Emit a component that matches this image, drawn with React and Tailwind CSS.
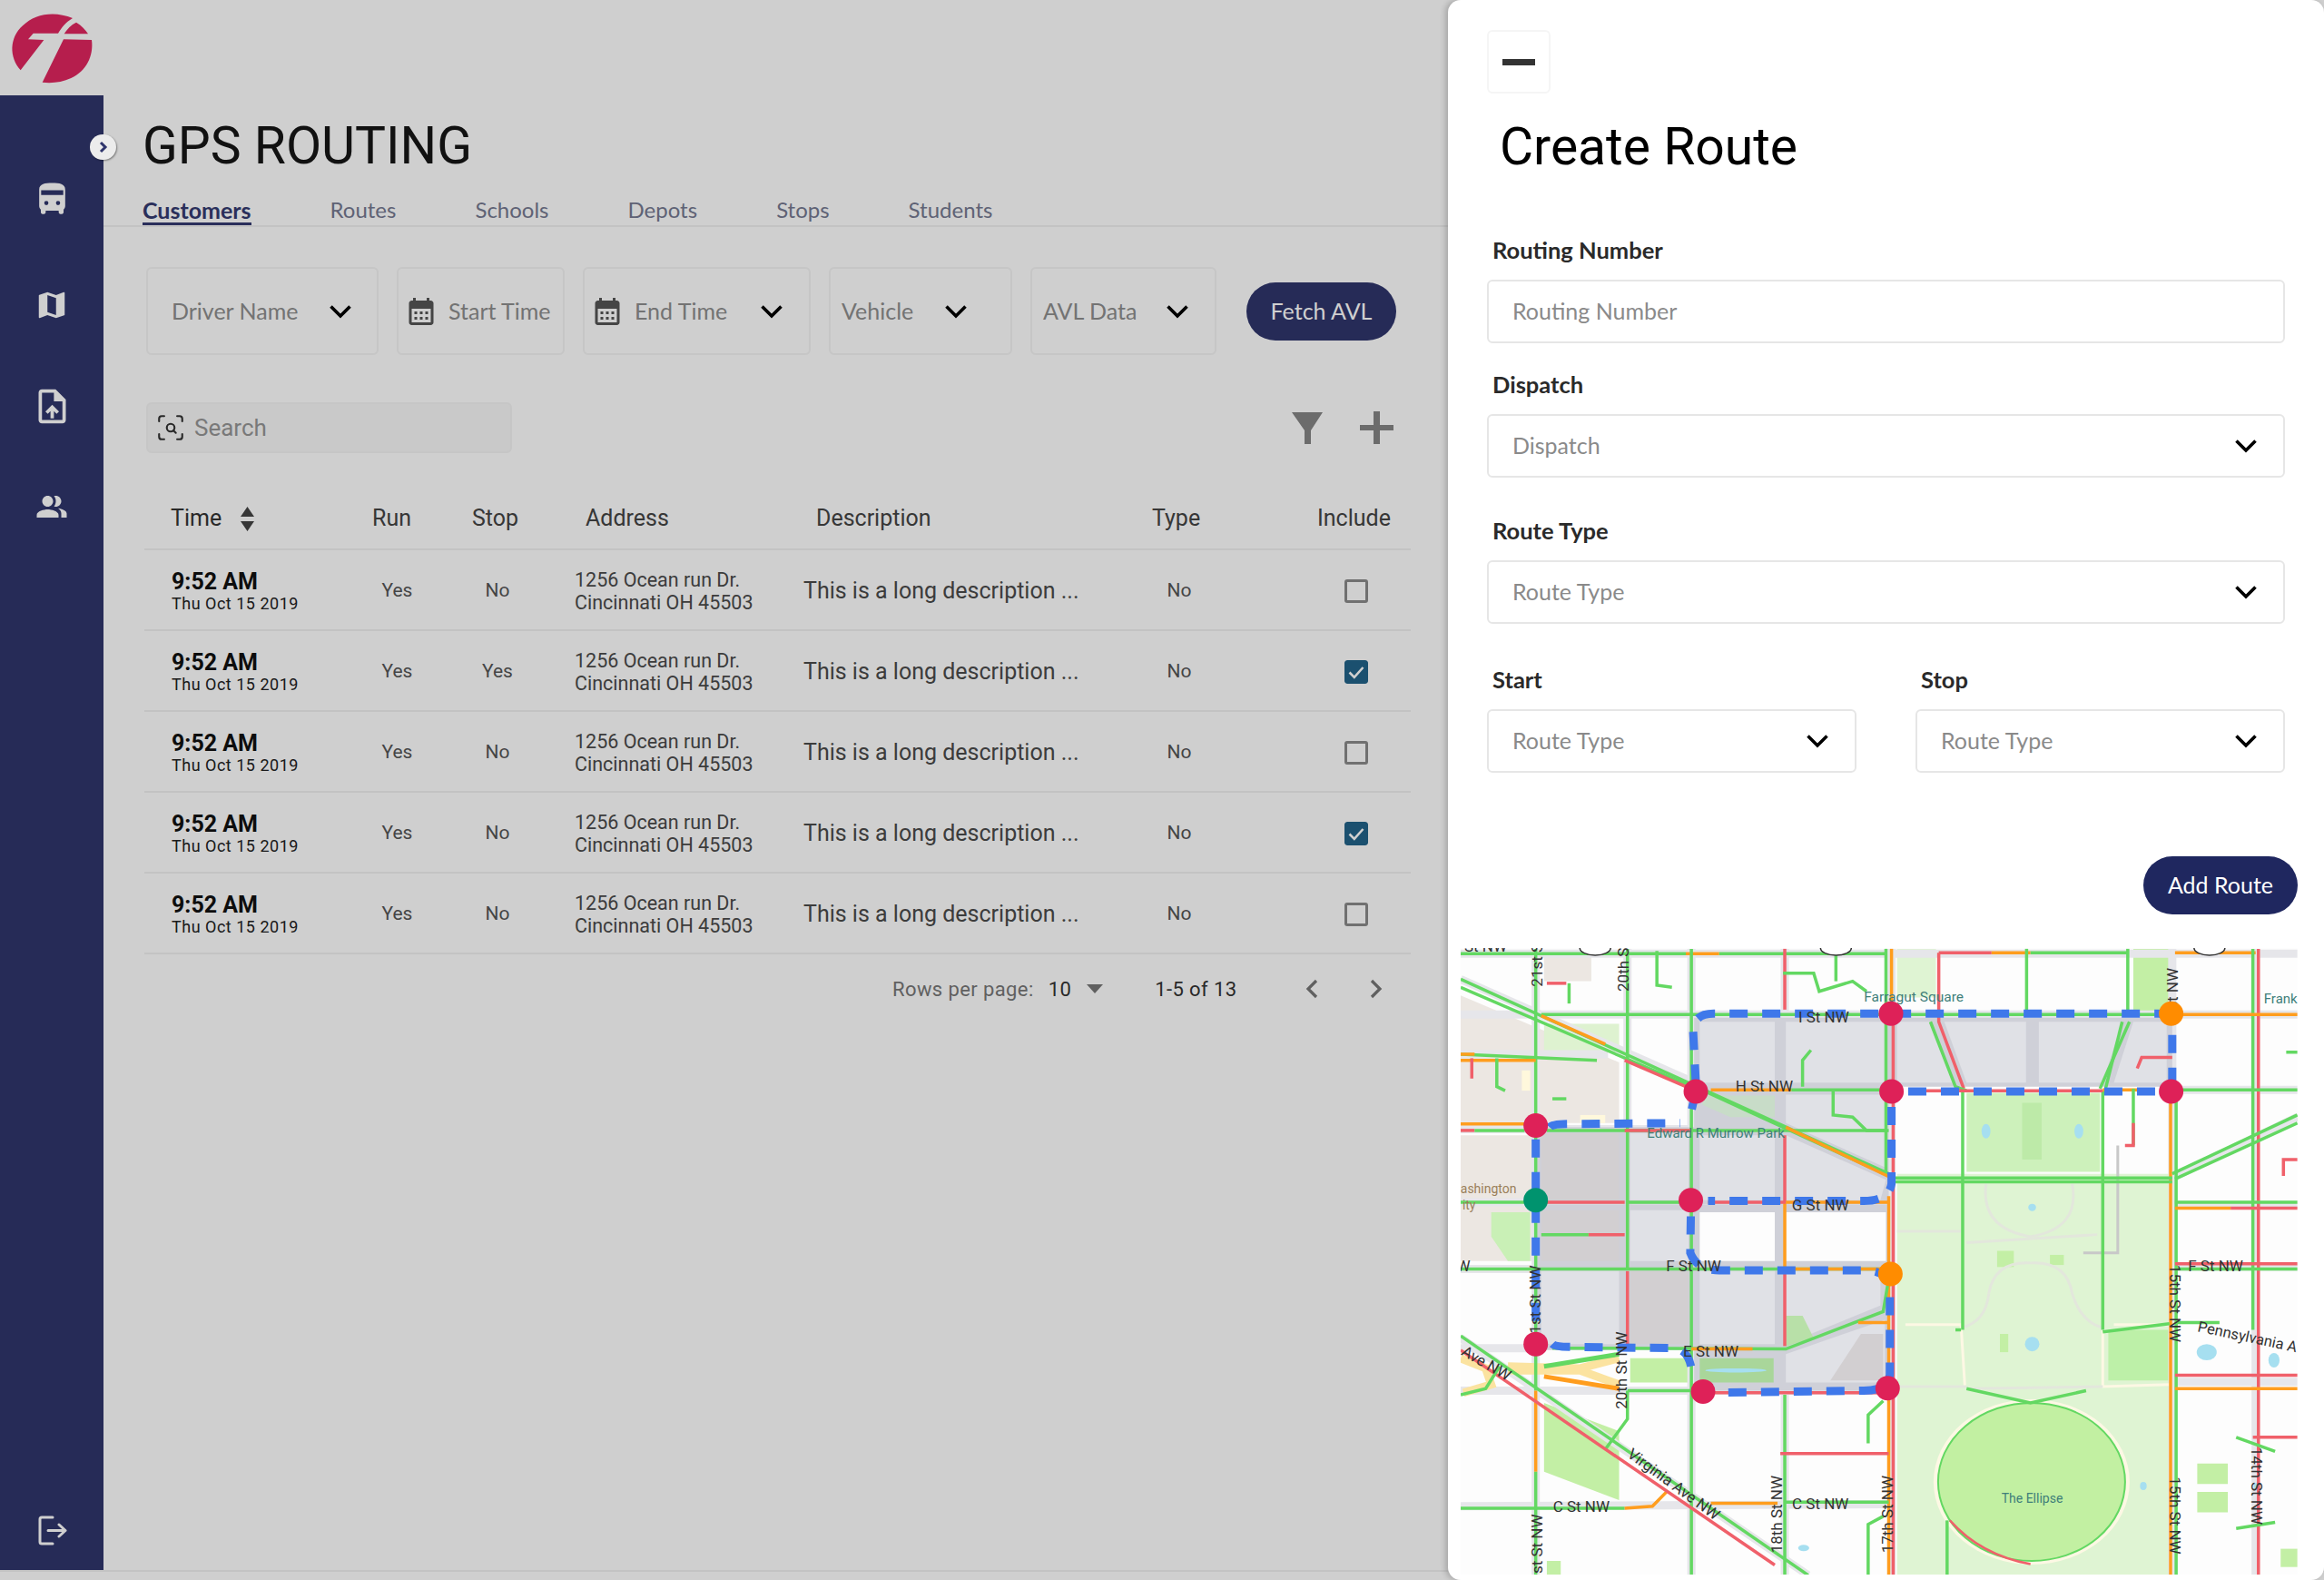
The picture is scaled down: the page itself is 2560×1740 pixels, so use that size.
import { ScanSearch } from "lucide-react";

const rows = [
  { stop: "No", on: false },
  { stop: "Yes", on: true },
  { stop: "No", on: false },
  { stop: "No", on: true },
  { stop: "No", on: false },
];

const tabs = ["Customers", "Routes", "Schools", "Depots", "Stops", "Students"];

// table columns: time, run, stop, address, description, type, include
const cols = "grid grid-cols-[231px_95px_126px_254px_374px_120px_195px]";

function Chevron({ className = "" }) {
  return (
    <svg width="26" height="16" viewBox="0 0 26 16" className={className}>
      <path d="M2.5 2.5 L13 13 L23.5 2.5" fill="none" stroke="#000" strokeWidth="3.6" />
    </svg>
  );
}

function Calendar() {
  return (
    <svg width="36" height="36" viewBox="0 0 24 24" fill="#555" className="shrink-0">
      <path d="M19 4h-1V2h-2v2H8V2H6v2H5c-1.11 0-1.99.9-1.99 2L3 20c0 1.1.89 2 2 2h14c1.1 0 2-.9 2-2V6c0-1.1-.9-2-2-2zm0 16H5V10h14v10zM9 14H7v-2h2v2zm4 0h-2v-2h2v2zm4 0h-2v-2h2v2zm-8 4H7v-2h2v2zm4 0h-2v-2h2v2zm4 0h-2v-2h2v2z" />
    </svg>
  );
}

function Logo() {
  return (
    <svg width="160" height="105" viewBox="0 0 480 315">
      <g fill="#e0265f">
        <path d="M68 232 C30 190 30 125 75 85 C115 45 180 35 240 60 C215 75 205 90 192 110 L110 110 L93 130 L145 132 Z" />
        <path d="M252 74 C270 85 282 98 291 112 L212 112 C222 95 235 82 252 74 Z" />
        <path d="M210 130 L303 132 C310 185 285 235 235 258 C205 272 170 276 140 272 Z" />
      </g>
    </svg>
  );
}

function Sidebar() {
  return (
    <div className="w-[114px] shrink-0 flex flex-col">
      <div className="h-[105px]">
        <Logo />
      </div>
      <div className="flex-1 bg-[#2f356c] flex flex-col items-center text-white">
        <div className="h-[48px] mt-[90px] flex items-center">
          <svg width="43" height="43" viewBox="0 0 24 24" fill="currentColor">
            <path fillRule="evenodd" d="M4 16c0 .88.39 1.67 1 2.22V20c0 .55.45 1 1 1h1c.55 0 1-.45 1-1v-1h8v1c0 .55.45 1 1 1h1c.55 0 1-.45 1-1v-1.78c.61-.55 1-1.34 1-2.22V6c0-3.5-3.58-4-8-4s-8 .5-8 4v10zM5.2 6.4h13.6v3H5.2zM8.4 13a1.3 1.3 0 1 1 0 2.6 1.3 1.3 0 0 1 0-2.6zM15.6 13a1.3 1.3 0 1 1 0 2.6 1.3 1.3 0 0 1 0-2.6z" />
          </svg>
        </div>
        <div className="h-[48px] mt-[69px] flex items-center">
          <svg width="38" height="38" viewBox="0 0 24 24" fill="currentColor">
            <path d="M20.5 3l-.16.03L15 5.1 9 3 3.36 4.9c-.21.07-.36.25-.36.48V20.5c0 .28.22.5.5.5l.16-.03L9 18.9l6 2.1 5.64-1.9c.21-.07.36-.25.36-.48V3.5c0-.28-.22-.5-.5-.5zM15 19l-6-2.11V5l6 2.11V19z" />
          </svg>
        </div>
        <div className="h-[48px] mt-[63px] flex items-center">
          <svg width="45" height="45" viewBox="0 0 24 24" fill="currentColor">
            <path d="M14 2H6c-1.1 0-1.99.9-1.99 2L4 20c0 1.1.89 2 1.99 2H18c1.1 0 2-.9 2-2V8l-6-6zm4 18H6V4h7v5h5v11zM8 15.01l1.41 1.41L11 14.84V19h2v-4.16l1.59 1.59L16 15.01 12.01 11 8 15.01z" />
          </svg>
        </div>
        <div className="h-[48px] mt-[63px] flex items-center">
          <svg width="36" height="36" viewBox="0 0 24 24" fill="currentColor">
            <path d="M16.67 13.13C18.04 14.06 19 15.32 19 17v3h4v-3c0-2.18-3.57-3.47-6.33-3.87zM15 12c2.21 0 4-1.79 4-4s-1.79-4-4-4c-.47 0-.91.1-1.33.24C14.5 5.27 15 6.58 15 8s-.5 2.73-1.33 3.76c.42.14.86.24 1.33.24zM9 12c2.21 0 4-1.79 4-4s-1.79-4-4-4-4 1.79-4 4 1.79 4 4 4zm0 2c-2.67 0-8 1.34-8 4v2h16v-2c0-2.66-5.33-4-8-4z" />
          </svg>
        </div>
        <div className="h-[48px] mt-auto mb-[20px] flex items-center">
          <svg width="33" height="33" viewBox="0 0 33 33" fill="none" stroke="currentColor" strokeWidth="3" strokeLinecap="round" strokeLinejoin="round">
            <path d="M17 2 H5 a2 2 0 0 0 -2 2 V29 a2 2 0 0 0 2 2 H17" />
            <path d="M12 16.500 H31 M24 10 L31 16.500 L24 23" />
          </svg>
        </div>
      </div>
    </div>
  );
}

function Filters() {
  return (
    <div className="flex items-center ml-[47px] mt-[44px]">
      <div className="w-[256px] h-[97px] border-2 border-[#f4f4f4] rounded-md flex items-center justify-between pl-[26px] pr-[27px] font-[Lato] text-[25px] text-[#8e8e8e]">
        <span>Driver Name</span>
        <Chevron />
      </div>
      <div className="w-[185px] h-[97px] ml-[20px] border-2 border-[#f4f4f4] rounded-md flex items-center gap-[12px] pl-[7px] font-[Lato] text-[25px] text-[#8e8e8e] whitespace-nowrap">
        <Calendar />
        <span>Start Time</span>
      </div>
      <div className="w-[251px] h-[97px] ml-[20px] border-2 border-[#f4f4f4] rounded-md flex items-center gap-[12px] pl-[7px] pr-[28px] font-[Lato] text-[25px] text-[#8e8e8e] whitespace-nowrap">
        <Calendar />
        <span>End Time</span>
        <Chevron className="ml-auto" />
      </div>
      <div className="w-[202px] h-[97px] ml-[20px] border-2 border-[#f4f4f4] rounded-md flex items-center justify-between pl-[12px] pr-[47px] font-[Lato] text-[25px] text-[#8e8e8e]">
        <span>Vehicle</span>
        <Chevron />
      </div>
      <div className="w-[205px] h-[97px] ml-[20px] border-2 border-[#f4f4f4] rounded-md flex items-center justify-between pl-[12px] pr-[28px] font-[Lato] text-[25px] text-[#8e8e8e]">
        <span>AVL Data</span>
        <Chevron />
      </div>
      <button className="w-[165px] h-[64px] ml-[33px] rounded-full bg-[#2f356c] text-white font-[Lato] text-[25px]">
        Fetch AVL
      </button>
    </div>
  );
}

function Toolbar() {
  return (
    <div className="flex items-center justify-between ml-[47px] mt-[52px] w-[1374px]">
      <div className="w-[403px] h-[56px] bg-[#f8f8f8] border-2 border-[#f4f4f4] rounded-md flex items-center pl-[8px] gap-[9px] font-[Roboto] text-[26px] text-[#969696]">
        <ScanSearch size={34} strokeWidth={1.5} color="#333" />
        <span>Search</span>
      </div>
      <div className="flex items-center gap-[41px]">
        <svg width="34" height="35" viewBox="0 0 34 35" fill="#858585">
          <path d="M0 0 H34 L21 20 V35 H14 V20 Z" />
        </svg>
        <svg width="37" height="36" viewBox="0 0 37 36" fill="#858585">
          <path d="M15 0 H22 V15 H37 V21 H22 V36 H15 V21 H0 V15 H15 Z" />
        </svg>
      </div>
    </div>
  );
}

function Checkbox({ on }) {
  if (on) {
    return (
      <svg width="26" height="26" viewBox="0 0 26 26" className="rounded-[3px]">
        <rect width="26" height="26" rx="3" fill="#226389" />
        <path d="M5.500 13.500 L10.800 18.800 L20.500 8" fill="none" stroke="#fff" strokeWidth="2.6" />
      </svg>
    );
  }
  return <div className="w-[26px] h-[26px] border-[3px] border-[#8a8a8a] rounded-[3px]" />;
}

function Table() {
  return (
    <div className="ml-[45px] mt-[39px] w-[1395px] font-[Roboto]">
      <div className={`${cols} h-[68px] items-center border-b-2 border-[#f0f0f0] text-[25px] text-[#444]`}>
        <div className="pl-[29px] flex items-center gap-[21px] text-[#333]">
          Time
          <svg width="15" height="27" viewBox="0 0 15 27" fill="#444">
            <path d="M7.500 0 L15 11 H0 Z M0 16 H15 L7.500 27 Z" />
          </svg>
        </div>
        <div className="pl-[20px]">Run</div>
        <div className="pl-[35px]">Stop</div>
        <div className="pl-[34px]">Address</div>
        <div className="pl-[34px]">Description</div>
        <div className="pl-[30px]">Type</div>
        <div className="pl-[92px]">Include</div>
      </div>
      {rows.map((r, i) => (
        <div key={i} className={`${cols} h-[89px] pt-[2px] items-center border-b-2 border-[#f0f0f0]`}>
          <div className="pl-[30px]">
            <div className="text-[25px] leading-[28px] font-bold text-[#111]">9:52 AM</div>
            <div className="text-[18px] leading-[20px] tracking-[0.5px] text-[#222]">Thu Oct 15 2019</div>
          </div>
          <div className="text-center text-[21px] text-[#555]">Yes</div>
          <div className="text-center text-[21px] text-[#555]">{r.stop}</div>
          <div className="pl-[22px] text-[21.5px] leading-[25px] text-[#4a4a4a]">
            <div>1256 Ocean run Dr.</div>
            <div>Cincinnati OH 45503</div>
          </div>
          <div className="pl-[20px] text-[25px] text-[#4a4a4a]">This is a long description ...</div>
          <div className="text-center text-[21px] text-[#555]">No</div>
          <div className="pl-[122px] flex"><Checkbox on={r.on} /></div>
        </div>
      ))}
    </div>
  );
}

function Pagination() {
  return (
    <div className="flex items-center ml-[869px] h-[76px] font-[Roboto] text-[22px] tracking-[0.4px]">
      <span className="text-[#777]">Rows per page:</span>
      <span className="ml-[16px] text-[#333]">10</span>
      <svg width="18" height="10" viewBox="0 0 18 10" fill="#777" className="ml-[17px]">
        <path d="M0 0 H18 L9 10 Z" />
      </svg>
      <span className="ml-[57px] text-[#333]">1-5 of 13</span>
      <svg width="14" height="22" viewBox="0 0 14 22" fill="none" stroke="#777" strokeWidth="3.200" className="ml-[76px]">
        <path d="M12 2 L3 11 L12 20" />
      </svg>
      <svg width="14" height="22" viewBox="0 0 14 22" fill="none" stroke="#777" strokeWidth="3.200" className="ml-[57px]">
        <path d="M2 2 L11 11 L2 20" />
      </svg>
    </div>
  );
}

function Field({ label, placeholder, select, className = "" }) {
  return (
    <div className={className}>
      <div className="pl-[6px] font-[Lato] font-bold text-[25.5px] leading-[26px] text-[#2a2a2a]">{label}</div>
      <div className="mt-[20px] h-[70px] border-2 border-[#e6e6e6] rounded-md flex items-center justify-between pl-[26px] pr-[28px] font-[Lato] text-[25px] text-[#8a8a8a]">
        <span>{placeholder}</span>
        {select && <Chevron />}
      </div>
    </div>
  );
}

// map is traced in a stretched crop, x/y bring the numbers back to real pixels
const x = (v) => (v - 15) / 1.633;
const y = (v) => (v - 8) / 2.24;
const poly = (p) => p.map((n, i) => (i % 2 ? y(n) : x(n))).join(" ");

const G = "#63d862";
const R = "#f0606a";
const O = "#ff9d1e";

const ground = [
  ["#ece7e2", [15,125,300,290,300,440,15,440]],
  ["#ece7e2", [15,470,145,470,145,780,15,780]],
  ["#ece7e2", [165,30,250,30,250,90,165,90]],
  ["#dff4d3", [800,565,1290,565,1290,1555,800,1555]],
  ["#cdf1bb", [925,365,1165,365,1165,560,925,560]],
  ["#dff4d3", [800,10,870,10,870,130,800,130]],
  ["#c3efa5", [1225,10,1290,10,1290,165,1225,165]],
  ["#def2d0", [165,195,300,195,300,265,165,265]],
  ["#bdf0a8", [1180,950,1290,950,1290,1075,1180,1075]],
  ["#c3efa5", [165,1130,300,1200,300,1370,165,1300]],
  ["#c3efa5", [320,1020,430,1020,430,1080,320,1080]],
  ["#c3efa5", [1340,1280,1395,1280,1395,1330,1340,1330]],
  ["#c3efa5", [1340,1350,1395,1350,1395,1400,1340,1400]],
  ["#c3efa5", [980,755,1010,755,1010,795,980,795]],
  ["#c3efa5", [1075,765,1100,765,1100,790,1075,790]],
  ["#c3efa5", [985,960,1000,960,1000,1005,985,1005]],
  ["#c3efa5", [1490,1490,1520,1490,1520,1535,1490,1535]],
  ["#c3efa5", [170,1520,195,1520,195,1555,170,1555]],
  ["#bdeaa8", [1025,390,1060,390,1060,530,1025,530]],
  ["#c9f0b6", [70,660,140,660,140,780,100,780,70,720]],
  ["#fff8dc", [125,310,140,310,140,360,125,360]],
  ["#fff8dc", [230,420,275,420,275,440,230,440]],
];

const roads = [
  [15,22,1520,22], [150,10,150,1555], [315,10,315,1000], [430,10,430,1555], [598,10,598,1555],
  [790,10,790,1555], [1295,10,1295,1555], [1445,10,1445,1555],
  [15,172,1520,172], [15,270,280,270], [1300,358,1520,358], [15,455,790,455], [1300,642,1520,642],
  [15,635,150,635], [1300,795,1520,795], [15,800,150,800], [15,995,150,995],
  [15,1100,790,1100], [1300,1078,1520,1078], [15,1385,790,1380], [15,85,435,340], [15,970,640,1555],
  [1295,575,1520,425],
];

// grey underlay of the dimmed blocks and the streets between them
const underlay = [
  [435,180,1295,180,1295,350,785,350,785,640,150,640,150,450,435,450],
  [150,640,785,640,785,800,150,800],
  [150,795,785,795,785,1100,435,1100,435,1000,150,1000],
];
const whiteBlocks = [
  [445,660,580,660,580,780,445,780],
  [600,660,780,660,780,780,600,780],
];

const blocks = [
  ["#e0e1e6", [445,190,580,190,580,340,445,340]],
  ["#e0e1e6", [600,190,780,190,780,340,600,340]],
  ["#e0e1e6", [800,190,862,190,905,340,800,340]],
  ["#e0e1e6", [885,190,1032,190,1032,340,925,340]],
  ["#e0e1e6", [1055,190,1205,190,1170,340,1055,340]],
  ["#e0e1e6", [1225,190,1285,190,1285,340,1190,340]],
  ["#e0e1e6", [600,370,780,370,780,550,600,440]],
  ["#c8dcc8", [450,372,580,372,580,425,500,425,450,395]],
  ["#e0e1e6", [445,470,580,470,580,630,445,630]],
  ["#e0e1e6", [600,470,780,580,770,630,600,630]],
  ["#d2cfd1", [160,465,300,465,300,630,160,630]],
  ["#e0e1e6", [320,465,425,465,425,630,320,630]],
  ["#d2cfd1", [160,655,300,655,300,780,160,780]],
  ["#e0e1e6", [320,655,425,655,425,780,320,780]],
  ["#e0e1e6", [160,805,300,805,300,985,160,985]],
  ["#d2cfd1", [320,805,425,805,425,985,320,985]],
  ["#e0e1e6", [445,805,580,805,580,985,445,985]],
  ["#e0e1e6", [600,805,770,805,770,890,600,985]],
  ["#e0e1e6", [600,1010,778,925,778,1080,600,1080]],
  ["#d2cfd1", [680,1075,735,960,775,960,775,1075]],
  ["#a9d69a", [445,1020,578,1020,578,1080,445,1080]],
  ["#b8e0a8", [600,915,630,915,650,970,600,990]],
];

// pale walks in the park
const walks = [
  ["#e3e7dc", "M960 590 Q950 700 1040 720 Q1130 700 1115 590"],
  ["#e3e7dc", "M965 860 Q975 780 1040 785 Q1105 780 1115 860 Q1130 930 1170 945"],
  ["#e3e7dc", "M915 945 Q960 930 965 860"],
  ["#e3e7dc", "M800 707 L915 707"],
  ["#e3e7dc", "M925 735 L1160 715"],
  ["#fdf8e4", "M815 937 L915 937 L922 1090 M1170 950 L1170 1090 L1290 1085 M1190 937 L1290 937"],
  ["#e3e7dc", "M925 1095 L1170 1090 M800 1090 L925 1090"],
  ["#e3e7dc", "M1090 1210 L1130 1210 L1130 1300 L1060 1310"],
  ["#c8c8c8", "M1197 495 L1197 760 L1135 760"],
];

const traffic = [
  [G, [15,22,420,22]], [O, [420,22,480,22]], [G, [480,22,780,22]], [R, [875,20,970,20]], [O, [970,20,1040,20]],
  [G, [1040,20,1215,20]], [O, [1300,20,1445,20]],
  [G, [150,10,150,1100]], [O, [150,1100,150,1300]], [G, [150,1300,150,1555]],
  [G, [315,10,315,800]], [R, [315,805,315,990]], [G, [315,1100,315,1170,275,1245]],
  [G, [430,10,430,1555]], [G, [598,1110,598,1555]], [O, [598,635,598,800]], [R, [598,10,598,160]],
  [R, [598,470,598,635]], [R, [598,800,598,990]], [O, [790,10,790,170]], [R, [793,170,793,1555]],
  [O, [785,620,785,1555]], [G, [780,10,780,170]], [G, [780,170,780,560]],
  [G, [918,360,918,950]], [G, [1170,360,1170,950]], [R, [875,20,875,190,920,355]], [G, [860,190,905,350,925,360]],
  [G, [1218,190,1165,355]], [G, [1205,190,1175,355]], [G, [1033,10,1033,172]], [G, [1215,10,1215,172]],
  [O, [1292,360,1292,1555]], [G, [1302,360,1302,1555]], [G, [1440,10,1440,950]], [R, [1450,10,1450,1555]],
  [G, [160,172,1290,172]], [O, [1300,172,1520,172]], [O, [465,358,610,358]], [G, [610,358,785,358]],
  [R, [820,360,1170,360]], [O, [1170,358,1250,358]], [G, [1300,358,1520,358]],
  [O, [15,442,130,442]], [R, [15,458,40,458]], [G, [40,458,130,458]], [G, [170,458,780,458]], [R, [310,458,430,458]],
  [G, [15,635,130,635]], [R, [170,635,310,635]], [G, [315,635,410,635]], [R, [460,635,600,635]], [O, [600,635,785,635]],
  [G, [1300,635,1520,635]], [O, [1300,650,1400,650]], [R, [1400,650,1520,650]],
  [G, [15,800,780,800]], [O, [600,800,785,800]], [R, [1300,787,1520,787]], [G, [1300,800,1520,800]],
  [G, [180,995,600,997,775,905,783,840]], [O, [430,997,540,997]], [G, [1300,932,1380,932]],
  [G, [315,1100,430,1100]], [R, [470,1105,785,1105]], [O, [730,932,785,932]],
  [R, [1300,1062,1520,1062]], [O, [1300,1095,1520,1095]], [R, [590,1255,785,1255]],
  [G, [15,1390,310,1390]], [O, [310,1390,360,1385,385,1350]], [O, [465,1378,585,1378]], [G, [598,1375,785,1375]],
  [G, [15,85,785,565]], [G, [15,105,430,350]], [O, [160,175,275,245]], [R, [310,285,420,350]],
  [G, [460,365,785,570]], [O, [600,450,785,572]],
  [G, [15,965,640,1555]], [R, [15,1000,580,1530]],
  [G, [795,575,1295,575]], [G, [795,585,1295,585]], [G, [1295,565,1520,420]], [G, [1300,578,1520,440]],
  [G, [15,270,260,285]], [O, [15,285,150,285]], [O, [15,270,40,270]], [R, [35,280,35,330]], [G, [80,280,80,350,95,360]],
  [G, [368,15,368,100,395,105]], [R, [170,95,205,95]], [G, [210,95,210,145]],
  [G, [595,70,650,70,660,115,720,90,745,115]], [G, [690,20,690,90]],
  [G, [630,350,630,285,645,260]], [G, [685,360,685,420,720,425,745,458,785,458]],
  [G, [205,380,180,380]], [G, [160,715,245,715]], [R, [245,715,310,715]],
  [R, [1232,305,1240,278,1295,278]], [R, [1495,570,1495,530,1520,530]], [G, [1500,265,1520,265]],
  [G, [1225,355,1225,495]], [R, [1225,440,1225,495,1210,495]],
  [G, [748,1230,748,1160,775,1125]], [G, [748,1555,748,1430,775,1410]], [G, [890,1555,890,1420]],
  [G, [915,950,905,950]], [G, [1170,955,1290,935]], [G, [925,1095,1040,1130,1140,1100]],
  [G, [15,1110,60,1095,85,1040]], [G, [1410,1215,1480,1250]], [G, [1410,1440,1480,1425]], [R, [1440,1215,1520,1215]],
];

// thick ramp west of 20th
const ramp = [
  ["#fbe3a0", 9, [15,1020,60,1045,70,1085,20,1105]],
  ["#fbe3a0", 9, [100,1040,230,1045,300,1020]],
  ["#fbe3a0", 9, [100,1050,230,1050,300,1085]],
  [O, 5, [165,1065,300,1095]],
  [G, 5, [165,1040,300,1010]],
];

const route = [
  "M{438,340} L{433,210} Q{435,170} {470,170} L{1270,170} Q{1295,170} {1295,220} L{1295,340}",
  "M{820,362} Q{825,362} {850,362} L{1270,362}",
  "M{175,450} Q{180,442} {210,442} L{410,440} M{438,362} L{430,410}",
  "M{790,400} L{790,590} Q{785,632} {740,632} L{460,632}",
  "M{429,670} L{428,760} Q{440,803} {480,803} L{740,803} Q{787,803} {787,850} L{787,1060} Q{785,1100} {740,1100} L{470,1105}",
  "M{150,480} L{150,960}",
  "M{180,985} Q{185,992} {210,992} L{400,995} Q{430,1000} {432,1070}",
].map((d) => d.replace(/\{(\d+),(\d+)\}/g, (_, a, b) => `${x(+a)} ${y(+b)}`));

const markers = [
  ["#de2158", 789, 170], ["#de2158", 438, 362], ["#de2158", 790, 362], ["#de2158", 1293, 362],
  ["#de2158", 150, 446], ["#de2158", 429, 630], ["#de2158", 150, 985], ["#de2158", 451, 1102],
  ["#de2158", 783, 1094], ["#ff8c00", 1293, 170], ["#ff8c00", 788, 812], ["#00936e", 150, 630],
];

const labels = [
  ["Farragut Square", 830, 132, 0, "#3f7f7a", 15.5], ["I St NW", 668, 182, 0, "#333", 17], ["H St NW", 561, 352, 0, "#333", 17],
  ["Edward R Murrow Park", 474, 468, 0, "#3f7f7a", 15], ["G St NW", 662, 645, 0, "#333", 17], ["F St NW", 434, 795, 0, "#333", 17],
  ["E St NW", 465, 1005, 0, "#333", 17], ["F St NW", 1373, 795, 0, "#333", 17], ["ashington", 65, 605, 0, "#9a7f5a", 14],
  ["ity", 30, 645, 0, "#9a7f5a", 14], ["C St NW", 232, 1388, 0, "#333", 17], ["C St NW", 662, 1383, 0, "#333", 17],
  ["The Ellipse", 1043, 1368, 0, "#3f7f7a", 14], ["Frank", 1490, 135, 0, "#3f7f7a", 15], ["21st S", 155, 50, -90, "#333", 17],
  ["20th St", 310, 55, -90, "#333", 17], ["1st St NW", 152, 875, -90, "#333", 17], ["20th St NW", 307, 1050, -90, "#333", 17],
  ["18th St NW", 585, 1405, -90, "#333", 17], ["17th St NW", 785, 1405, -90, "#333", 17], ["St NW", 1297, 110, -90, "#333", 17],
  ["st St NW", 155, 1478, -90, "#333", 17], ["15th St NW", 1297, 885, 90, "#333", 17], ["15th St NW", 1297, 1408, 90, "#333", 17],
  ["14th St NW", 1445, 1335, 90, "#333", 17], ["Virginia Ave NW", 397, 1333, 36, "#333", 17], ["Ave NW", 60, 1035, 30, "#333", 17],
  ["Pennsylvania A", 1430, 970, 12, "#333", 16.5], ["W", 20, 795, 0, "#333", 17], ["St NW", 60, 7, 0, "#333", 17],
];

const water = [[960,460,8,18], [1127,460,8,18], [1043,985,13,18], [1043,648,7,9], [1243,1335,6,10], [1448,1337,6,10], [1357,1005,18,20], [1478,1025,10,18], [510,1050,55,5], [632,1488,10,8]];

function RouteMap() {
  return (
    <svg width="922" height="690" viewBox="0 0 922 690" className="block bg-[#fdfdfd] font-[Roboto]">
      {ground.map(([c, p], i) => <polygon key={i} points={poly(p)} fill={c} />)}
      {roads.map((p, i) => <polyline key={i} points={poly(p)} fill="none" stroke="#e6e6ea" strokeWidth="9" />)}
      {underlay.map((p, i) => <polygon key={i} points={poly(p)} fill="#cfd0d8" />)}
      {whiteBlocks.map((p, i) => <polygon key={i} points={poly(p)} fill="#fdfdfd" />)}
      {blocks.map(([c, p], i) => <polygon key={i} points={poly(p)} fill={c} />)}
      {walks.map(([c, d], i) => (
        <path key={i} d={d.replace(/(-?\d+) (-?\d+)/g, (_, a, b) => `${x(+a)} ${y(+b)}`)} fill="none" stroke={c} strokeWidth="3" />
      ))}
      <ellipse cx={x(1042)} cy={y(1325)} rx={108} ry={91} fill="#fdf8e4" />
      <ellipse cx={x(1042)} cy={y(1325)} rx={103} ry={87} fill="#c2f0a2" stroke={G} strokeWidth="2" />
      <path d={`M${x(895)} ${y(1420)} Q${x(950)} ${y(1505)} ${x(1040)} ${y(1528)}`} fill="none" stroke={R} strokeWidth="2.500" />
      {water.map(([a, b, rx, ry], i) => <ellipse key={i} cx={x(a)} cy={y(b)} rx={rx / 1.633} ry={ry / 2.24} fill="#a6dff0" />)}
      {ramp.map(([c, w, p], i) => <polyline key={i} points={poly(p)} fill="none" stroke={c} strokeWidth={w} />)}
      {traffic.map(([c, p], i) => <polyline key={i} points={poly(p)} fill="none" stroke={c} strokeWidth="3.500" />)}
      {[[257, 8], [690, 8], [1362, 8]].map(([a, b], i) => (
        <ellipse key={i} cx={x(a)} cy={y(b)} rx="17" ry="8" fill="#fff" stroke="#333" strokeWidth="1.500" />
      ))}
      {route.map((d, i) => <path key={i} d={d} fill="none" stroke="#3f78ea" strokeWidth="9" strokeDasharray="20 16" />)}
      {labels.map(([t, a, b, r, c, s], i) => (
        <text key={i} x={x(a)} y={y(b)} fontSize={s} fill={c} textAnchor="middle" dominantBaseline="middle" transform={r ? `rotate(${r} ${x(a)} ${y(b)})` : undefined}>{t}</text>
      ))}
      {markers.map(([c, a, b], i) => <circle key={i} cx={x(a)} cy={y(b)} r="13.500" fill={c} />)}
    </svg>
  );
}

function CreateRoutePanel() {
  return (
    <div className="absolute right-0 top-0 w-[965px] h-[1740px] bg-white rounded-[14px] shadow-[-3px_0_6px_rgba(0,0,0,0.2)] pl-[43px] pr-[43px] pt-[33px]">
      <div className="w-[70px] h-[70px] border-2 border-[#f5f5f5] rounded-md flex items-center justify-center">
        <div className="w-[36px] h-[7px] bg-[#333]" />
      </div>
      <h2 className="ml-[14px] mt-[25px] font-[Roboto] text-[57px] leading-[68px] text-black">Create Route</h2>
      <Field className="mt-[66px]" label="Routing Number" placeholder="Routing Number" />
      <Field className="mt-[32px]" label="Dispatch" placeholder="Dispatch" select />
      <Field className="mt-[45px]" label="Route Type" placeholder="Route Type" select />
      <div className="flex justify-between mt-[48px]">
        <Field className="w-[407px]" label="Start" placeholder="Route Type" select />
        <Field className="w-[407px]" label="Stop" placeholder="Route Type" select />
      </div>
      <div className="flex justify-end -mr-[14px] mt-[92px]">
        <button className="w-[170px] h-[64px] rounded-full bg-[#1f275f] text-white font-[Lato] text-[25px]">Add Route</button>
      </div>
      <div className="-ml-[29px] mt-[37px]">
        <RouteMap />
      </div>
    </div>
  );
}

export default function App() {
  return (
    <div className="relative w-[2560px] h-[1740px] overflow-hidden bg-white">
      <div className="flex h-[1731px] border-b-2 border-[#f0f0f0]">
        <Sidebar />
        <div className="flex-1">
          <h1 className="ml-[43px] mt-[126px] font-[Roboto] text-[57px] leading-[70px] text-[#151515]">GPS ROUTING</h1>
          <div className="h-[46px] mt-[8px] border-b-2 border-[#f0f0f0] pl-[43px] flex gap-[87px] font-[Lato] text-[24px] text-[#757991]">
            {tabs.map((t, i) => (
              <div key={t} className={i === 0 ? "h-[44px] pt-[12px] border-b-[3px] border-[#343a70] font-bold text-[25px] leading-[30px] text-[#343a70]" : "pt-[12px] leading-[30px]"}>{t}</div>
            ))}
          </div>
          <Filters />
          <Toolbar />
          <Table />
          <Pagination />
        </div>
      </div>
      <div className="absolute inset-0 bg-black/[0.19]" />
      <div className="absolute left-[99px] top-[148px] w-[29px] h-[28px] rounded-full bg-[#ececec] shadow-[1px_1px_2px_rgba(0,0,0,0.4)] flex items-center justify-center">
        <svg width="10" height="14" viewBox="0 0 10 14" fill="none" stroke="#2f356c" strokeWidth="3">
          <path d="M2 2 L7 7 L2 12" />
        </svg>
      </div>
      <CreateRoutePanel />
    </div>
  );
}
